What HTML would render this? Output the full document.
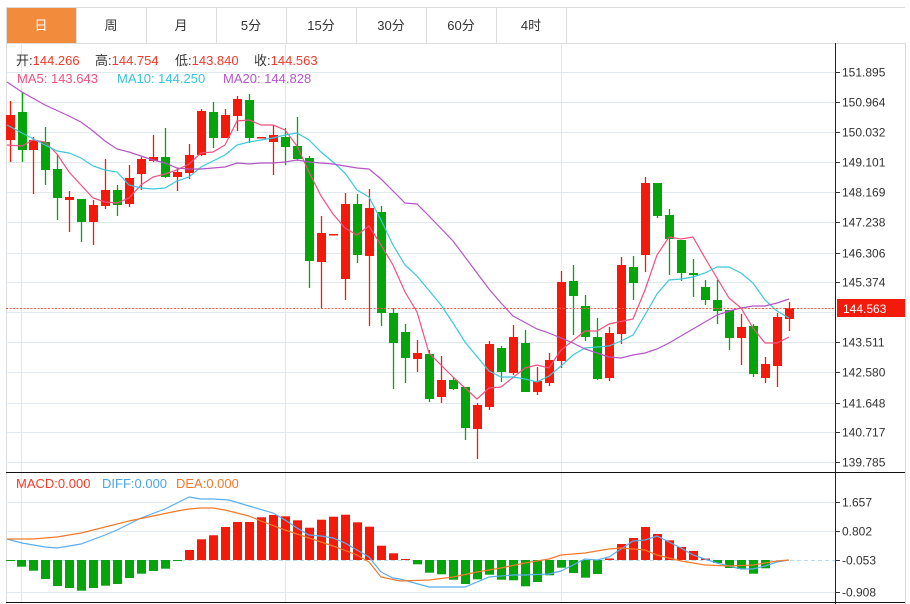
<!DOCTYPE html>
<html><head><meta charset="utf-8"><style>
html,body{margin:0;padding:0;background:#fff;width:910px;height:604px;overflow:hidden;font-family:"Liberation Sans","Noto Sans CJK SC",sans-serif}
svg{position:absolute;left:0;top:0}
</style></head><body>
<svg id="s" width="910" height="604" xmlns="http://www.w3.org/2000/svg" font-family="Liberation Sans, Noto Sans CJK SC, sans-serif">
<rect x="6" y="7" width="70" height="36" fill="#f28b3c"/>
<g stroke="#dcdcdc" stroke-width="1" fill="none">
<line x1="6" y1="7.5" x2="905" y2="7.5"/>
<line x1="6" y1="43.5" x2="905" y2="43.5"/>
<line x1="6.5" y1="7" x2="6.5" y2="604"/>
<line x1="76.5" y1="7" x2="76.5" y2="43"/><line x1="146.5" y1="7" x2="146.5" y2="43"/><line x1="216.5" y1="7" x2="216.5" y2="43"/><line x1="286.5" y1="7" x2="286.5" y2="43"/><line x1="356.5" y1="7" x2="356.5" y2="43"/><line x1="426.5" y1="7" x2="426.5" y2="43"/><line x1="496.5" y1="7" x2="496.5" y2="43"/><line x1="566.5" y1="7" x2="566.5" y2="43"/>
<line x1="905.5" y1="43" x2="905.5" y2="604"/>
</g>
<g font-size="13" fill="#333" text-anchor="middle">
<text x="41" y="30" fill="#fff">日</text><text x="111" y="30">周</text><text x="181" y="30">月</text><text x="251" y="30">5分</text><text x="321" y="30">15分</text><text x="391" y="30">30分</text><text x="461" y="30">60分</text><text x="531" y="30">4时</text>
</g>
<g id="grid" stroke="#e1e9f0" stroke-width="1"></g>
<g id="cand"></g>
<g id="lines" fill="none" stroke-width="1.2"></g>
<line x1="6" y1="308.5" x2="835" y2="308.5" stroke="#f06050" stroke-dasharray="2,1.5" stroke-width="1"/>
<g font-size="13">
<text x="16" y="65" fill="#333">开:<tspan fill="#f03c2a">144.266</tspan></text>
<text x="95" y="65" fill="#333">高:<tspan fill="#f03c2a">144.754</tspan></text>
<text x="175" y="65" fill="#333">低:<tspan fill="#f03c2a">143.840</tspan></text>
<text x="254" y="65" fill="#333">收:<tspan fill="#f03c2a">144.563</tspan></text>
<text x="17" y="83" fill="#f2507f">MA5: 143.643</text>
<text x="117" y="83" fill="#35c4d8">MA10: 144.250</text>
<text x="223" y="83" fill="#b455c8">MA20: 144.828</text>
<text x="16" y="488" fill="#f03c2a">MACD:0.000</text>
<text x="102" y="488" fill="#4aa5ea">DIFF:0.000</text>
<text x="176" y="488" fill="#f0782a">DEA:0.000</text>
</g>
<line x1="6" y1="472.5" x2="905" y2="472.5" stroke="#111"/>
<line x1="6" y1="602.5" x2="905" y2="602.5" stroke="#111"/>
<line x1="835.5" y1="43" x2="835.5" y2="472" stroke="#222"/>
<line x1="835.5" y1="472" x2="835.5" y2="604" stroke="#222"/>
<g id="axis" font-size="12" fill="#333"></g>
<rect x="837" y="299" width="68" height="18" fill="#f21b0b"/>
<text x="843" y="313" font-size="12" fill="#fff">144.563</text>
</svg>
<script>
var NS="http://www.w3.org/2000/svg";
function el(p,t,a){var e=document.createElementNS(NS,t);for(var k in a)e.setAttribute(k,a[k]);document.getElementById(p).appendChild(e);return e;}
[72,102,132,162,192,222,253,282,312,342,372,403,432,462,502,531,592].forEach(function(y){el('grid','line',{x1:6,x2:835,y1:y+.5,y2:y+.5});});
[21,285,561].forEach(function(x){el('grid','line',{x1:x+.5,x2:x+.5,y1:43,y2:602});});
el('grid','line',{x1:6,x2:835,y1:560.5,y2:560.5,stroke:'#b8dcec','stroke-dasharray':'4,3'});
[[151.895,72],[150.964,102],[150.032,132],[149.101,162],[148.169,192],[147.238,222],[146.306,253],[145.374,282],[143.511,342],[142.580,372],[141.648,403],[140.717,432],[139.785,462],['1.657',502],['0.802',531],['-0.053',560],['-0.908',592]].forEach(function(a){
 el('axis','line',{x1:835,x2:840,y1:a[1]+.5,y2:a[1]+.5,stroke:'#333'});
 var t=el('axis','text',{x:842,y:a[1]+4.5});t.textContent=(typeof a[0]=='number')?a[0].toFixed(3):a[0];});
var R='#f21b0b',G='#04a40a';
var C=[[10,'r',115,140,101,162],[22,'g',112,150,92,162],[33,'r',140,150,137,194],[45,'g',142,170,127,185],[57,'g',169,198,154,220],[69,'r',197,200,191,232],[81,'g',199,222,199,242],[93,'r',205,222,200,245],[105,'r',190,206,159,209],[117,'g',190,205,185,216],[129,'r',178,204,165,207],[141,'r',159,174,157,190],[153,'r',157,161,135,162],[165,'g',157,177,128,178],[177,'r',172,177,168,191],[189,'r',155,173,144,179],[201,'r',111,155,109,156],[213,'g',112,138,102,148],[225,'r',115,138,109,138],[237,'r',99,116,96,131],[249,'g',100,138,94,143],[261,'r',137,138,137,138],[273,'r',135,142,125,175],[285,'g',137,147,128,165],[297,'g',146,159,117,161],[309,'g',158,261,156,288],[321,'r',233,262,216,308],[333,'r',234,235,234,235],[345,'r',204,279,193,300],[357,'g',204,255,194,263],[369,'r',208,256,189,326],[381,'g',212,313,206,326],[393,'g',313,343,308,389],[405,'g',332,358,324,383],[417,'r',353,359,340,372],[429,'g',354,399,350,402],[441,'r',380,397,356,403],[453,'g',380,389,377,390],[465,'g',387,428,387,440],[477,'r',405,429,403,459],[489,'r',344,407,341,410],[501,'g',348,372,346,382],[513,'r',337,373,325,375],[525,'g',343,392,330,392],[537,'r',381,392,367,395],[549,'r',360,383,353,386],[561,'r',282,361,271,368],[573,'g',281,296,265,335],[585,'g',306,337,295,341],[597,'g',337,379,318,380],[609,'r',333,378,327,381],[621,'r',265,334,257,344],[633,'g',267,283,256,300],[645,'r',183,255,177,272],[657,'g',183,216,183,218],[669,'g',215,239,209,275],[681,'g',240,273,240,281],[693,'g',273,275,259,297],[705,'g',287,300,280,305],[717,'g',300,311,280,324],[729,'g',310,338,310,350],[741,'r',327,338,314,365],[753,'g',326,374,324,377],[765,'r',364,378,357,383],[777,'r',317,366,313,387],[789,'r',308,319,302,331]];
C.forEach(function(c){var col=c[1]=='r'?R:G;
 el('cand','line',{x1:c[0]+.5,x2:c[0]+.5,y1:c[4],y2:c[5],stroke:col,'stroke-width':1.3});
 el('cand','rect',{x:c[0]-4,y:c[2],width:9,height:Math.max(1.5,c[3]-c[2]),fill:col});});
var M=[[10,560.7],[21,566.7],[33,570.7],[45,579],[57,586],[69,588],[81,590.7],[93,588],[105,585.7],[117,584],[129,578],[141,573.7],[153,571],[165,568.7],[177,561],[189,550],[201,539.3],[213,535.3],[225,527],[237,522],[249,522],[261,517.3],[273,515],[285,516.3],[297,520.3],[309,527.7],[321,519.7],[333,516.7],[345,514.7],[357,522.3],[369,526.7],[381,545.7],[393,553.3],[405,559],[417,564.3],[429,572.7],[441,574.3],[453,579.7],[465,584],[477,579.3],[489,574.7],[501,579.7],[513,580.3],[525,586.3],[537,582],[549,575.3],[561,567.7],[573,573],[585,577.7],[597,574],[609,558.5],[621,544],[633,538],[645,527],[657,534],[669,540.3],[681,547],[693,551],[705,558.5],[717,563],[729,568],[741,569],[753,573.7],[765,568.3]];
M.forEach(function(m){var y0=560,up=m[1]<y0;
 el('cand','rect',{x:m[0]-4,y:up?m[1]:y0,width:9,height:Math.max(1,Math.abs(m[1]-y0)),fill:up?R:G});});
function pl(pts,col){el('lines','polyline',{points:pts.map(function(p){return p.join(',')}).join(' '),stroke:col});}
pl([[7,145],[22,146],[33,140],[45,142],[57,154],[69,172],[81,185],[93,198],[105,202],[117,203],[129,198],[141,185],[153,177],[165,174],[177,170],[189,164],[201,153],[213,152],[225,145],[237,121],[249,120],[261,125],[273,125],[285,130],[297,146],[309,172],[321,196],[333,214],[345,228],[357,235],[369,226],[381,245],[393,265],[405,292],[417,312],[429,353],[453,377],[477,399],[489,388],[501,387],[525,368],[537,365],[549,368],[561,350],[585,331],[597,331],[609,324],[633,319],[645,290],[657,255],[669,237],[681,239],[693,237],[705,258],[729,298],[741,308],[753,328],[765,343],[777,343],[789,337]],'#f2507f');
pl([[7,125],[22,133],[45,145],[57,151],[69,153],[81,158],[93,166],[105,170],[117,172],[129,185],[141,188],[153,189],[165,188],[177,181],[189,177],[201,167],[213,161],[225,155],[237,145],[249,142],[261,140],[273,138],[285,135],[297,133],[309,140],[321,152],[333,162],[345,173],[357,190],[369,197],[381,220],[393,245],[405,265],[417,276],[441,305],[453,323],[465,342],[489,371],[501,377],[513,377],[525,379],[537,382],[549,376],[561,366],[573,355],[585,348],[597,347],[609,346],[621,341],[633,335],[645,315],[657,294],[669,280],[681,279],[693,277],[705,273],[717,267],[729,267],[741,273],[753,283],[765,300],[777,311],[789,318]],'#3cc8dc');
pl([[7,82],[22,92],[45,105],[69,116],[81,122],[93,131],[105,141],[117,149],[129,152],[141,156],[153,160],[165,163],[177,168],[189,169],[201,169],[213,168],[225,167],[237,163],[249,164],[261,163],[273,163],[285,162],[297,160],[309,162],[321,163],[333,164],[345,166],[357,168],[369,169],[381,179],[393,191],[405,203],[417,204],[429,216],[453,241],[477,273],[489,289],[501,303],[513,316],[537,329],[549,333],[561,338],[573,343],[585,349],[597,353],[609,357],[621,358],[633,355],[645,353],[657,349],[669,343],[681,336],[693,329],[705,322],[717,315],[729,311],[741,308],[753,306],[765,306],[777,303],[789,299]],'#b455c8');
pl([[7,539],[22,543],[45,547],[57,548],[81,544],[105,535],[117,530],[141,518],[165,509],[177,503],[189,497],[201,499],[213,499],[229,500],[249,506],[273,513],[285,520],[297,528],[309,535],[321,536],[333,538],[345,543],[357,550],[369,557],[381,572],[393,578],[400,579],[429,587],[465,587],[489,577],[513,575],[525,575],[549,574],[561,571],[573,565],[585,559],[597,560],[609,557],[621,549],[633,541],[645,540],[657,536],[669,542],[681,548],[693,555],[705,559],[717,563],[729,566],[741,569],[753,569],[765,566],[777,562],[789,560]],'#5aaef0');
pl([[7,539],[33,539],[57,537],[81,533],[105,527],[129,521],[153,516],[177,511],[189,509],[201,508],[213,508],[225,510],[249,516],[261,521],[285,530],[309,538],[333,546],[357,555],[369,562],[381,577],[400,581],[429,580],[453,577],[477,572],[501,568],[525,563],[549,559],[561,555],[585,553],[609,549],[621,548],[633,549],[645,550],[657,555],[669,558],[681,561],[693,563],[705,565],[729,566],[753,565],[777,561],[789,560]],'#f27a2a');
</script>
</body></html>
